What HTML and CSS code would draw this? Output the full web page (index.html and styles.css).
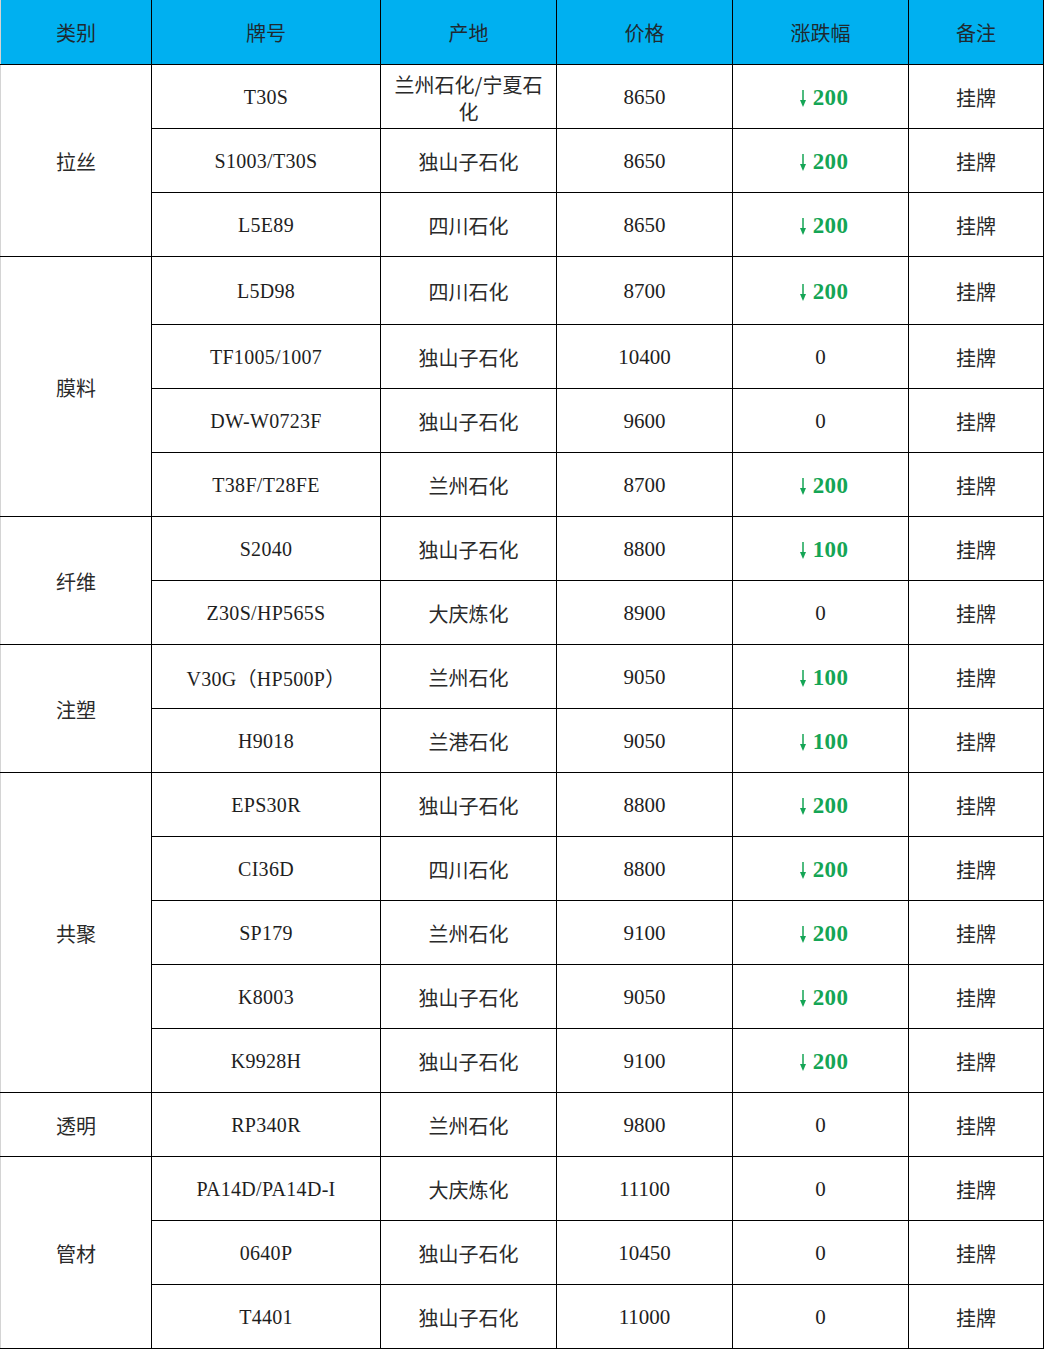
FILE: index.html
```html
<!DOCTYPE html>
<html lang="zh-CN">
<head>
<meta charset="utf-8">
<title>价格表</title>
<link rel="stylesheet" href="styles.css">
</head>
<body>
<table class="price">
  <colgroup>
    <col class="c1"><col class="c2"><col class="c3"><col class="c4"><col class="c5"><col class="c6">
  </colgroup>
  <thead>
    <tr class="head">
      <th class="first">类别</th><th>牌号</th><th>产地</th><th>价格</th><th>涨跌幅</th><th>备注</th>
    </tr>
  </thead>
  <tbody>
    <tr><td class="cat first" rowspan="3">拉丝</td><td class="code">T30S</td><td class="cn">兰州石化/宁夏石化</td><td class="num">8650</td><td class="chg"><span class="down"><svg class="arr" viewBox="0 0 8 19" width="8" height="19"><path d="M4 1V13" stroke="currentColor" stroke-width="1.5" fill="none"/><path d="M1 11L4 18L7 11Z" fill="currentColor"/></svg>200</span></td><td class="cn">挂牌</td></tr>
    <tr><td class="code">S1003/T30S</td><td class="cn">独山子石化</td><td class="num">8650</td><td class="chg"><span class="down"><svg class="arr" viewBox="0 0 8 19" width="8" height="19"><path d="M4 1V13" stroke="currentColor" stroke-width="1.5" fill="none"/><path d="M1 11L4 18L7 11Z" fill="currentColor"/></svg>200</span></td><td class="cn">挂牌</td></tr>
    <tr><td class="code">L5E89</td><td class="cn">四川石化</td><td class="num">8650</td><td class="chg"><span class="down"><svg class="arr" viewBox="0 0 8 19" width="8" height="19"><path d="M4 1V13" stroke="currentColor" stroke-width="1.5" fill="none"/><path d="M1 11L4 18L7 11Z" fill="currentColor"/></svg>200</span></td><td class="cn">挂牌</td></tr>

    <tr class="tall"><td class="cat first" rowspan="4">膜料</td><td class="code">L5D98</td><td class="cn">四川石化</td><td class="num">8700</td><td class="chg"><span class="down"><svg class="arr" viewBox="0 0 8 19" width="8" height="19"><path d="M4 1V13" stroke="currentColor" stroke-width="1.5" fill="none"/><path d="M1 11L4 18L7 11Z" fill="currentColor"/></svg>200</span></td><td class="cn">挂牌</td></tr>
    <tr><td class="code">TF1005/1007</td><td class="cn">独山子石化</td><td class="num">10400</td><td class="chg zero">0</td><td class="cn">挂牌</td></tr>
    <tr><td class="code">DW-W0723F</td><td class="cn">独山子石化</td><td class="num">9600</td><td class="chg zero">0</td><td class="cn">挂牌</td></tr>
    <tr><td class="code">T38F/T28FE</td><td class="cn">兰州石化</td><td class="num">8700</td><td class="chg"><span class="down"><svg class="arr" viewBox="0 0 8 19" width="8" height="19"><path d="M4 1V13" stroke="currentColor" stroke-width="1.5" fill="none"/><path d="M1 11L4 18L7 11Z" fill="currentColor"/></svg>200</span></td><td class="cn">挂牌</td></tr>

    <tr><td class="cat first" rowspan="2">纤维</td><td class="code">S2040</td><td class="cn">独山子石化</td><td class="num">8800</td><td class="chg"><span class="down"><svg class="arr" viewBox="0 0 8 19" width="8" height="19"><path d="M4 1V13" stroke="currentColor" stroke-width="1.5" fill="none"/><path d="M1 11L4 18L7 11Z" fill="currentColor"/></svg>100</span></td><td class="cn">挂牌</td></tr>
    <tr><td class="code">Z30S/HP565S</td><td class="cn">大庆炼化</td><td class="num">8900</td><td class="chg zero">0</td><td class="cn">挂牌</td></tr>

    <tr><td class="cat first" rowspan="2">注塑</td><td class="code">V30G（HP500P）</td><td class="cn">兰州石化</td><td class="num">9050</td><td class="chg"><span class="down"><svg class="arr" viewBox="0 0 8 19" width="8" height="19"><path d="M4 1V13" stroke="currentColor" stroke-width="1.5" fill="none"/><path d="M1 11L4 18L7 11Z" fill="currentColor"/></svg>100</span></td><td class="cn">挂牌</td></tr>
    <tr><td class="code">H9018</td><td class="cn">兰港石化</td><td class="num">9050</td><td class="chg"><span class="down"><svg class="arr" viewBox="0 0 8 19" width="8" height="19"><path d="M4 1V13" stroke="currentColor" stroke-width="1.5" fill="none"/><path d="M1 11L4 18L7 11Z" fill="currentColor"/></svg>100</span></td><td class="cn">挂牌</td></tr>

    <tr><td class="cat first" rowspan="5">共聚</td><td class="code">EPS30R</td><td class="cn">独山子石化</td><td class="num">8800</td><td class="chg"><span class="down"><svg class="arr" viewBox="0 0 8 19" width="8" height="19"><path d="M4 1V13" stroke="currentColor" stroke-width="1.5" fill="none"/><path d="M1 11L4 18L7 11Z" fill="currentColor"/></svg>200</span></td><td class="cn">挂牌</td></tr>
    <tr><td class="code">CI36D</td><td class="cn">四川石化</td><td class="num">8800</td><td class="chg"><span class="down"><svg class="arr" viewBox="0 0 8 19" width="8" height="19"><path d="M4 1V13" stroke="currentColor" stroke-width="1.5" fill="none"/><path d="M1 11L4 18L7 11Z" fill="currentColor"/></svg>200</span></td><td class="cn">挂牌</td></tr>
    <tr><td class="code">SP179</td><td class="cn">兰州石化</td><td class="num">9100</td><td class="chg"><span class="down"><svg class="arr" viewBox="0 0 8 19" width="8" height="19"><path d="M4 1V13" stroke="currentColor" stroke-width="1.5" fill="none"/><path d="M1 11L4 18L7 11Z" fill="currentColor"/></svg>200</span></td><td class="cn">挂牌</td></tr>
    <tr><td class="code">K8003</td><td class="cn">独山子石化</td><td class="num">9050</td><td class="chg"><span class="down"><svg class="arr" viewBox="0 0 8 19" width="8" height="19"><path d="M4 1V13" stroke="currentColor" stroke-width="1.5" fill="none"/><path d="M1 11L4 18L7 11Z" fill="currentColor"/></svg>200</span></td><td class="cn">挂牌</td></tr>
    <tr><td class="code">K9928H</td><td class="cn">独山子石化</td><td class="num">9100</td><td class="chg"><span class="down"><svg class="arr" viewBox="0 0 8 19" width="8" height="19"><path d="M4 1V13" stroke="currentColor" stroke-width="1.5" fill="none"/><path d="M1 11L4 18L7 11Z" fill="currentColor"/></svg>200</span></td><td class="cn">挂牌</td></tr>

    <tr><td class="cat first">透明</td><td class="code">RP340R</td><td class="cn">兰州石化</td><td class="num">9800</td><td class="chg zero">0</td><td class="cn">挂牌</td></tr>

    <tr><td class="cat first" rowspan="3">管材</td><td class="code">PA14D/PA14D-I</td><td class="cn">大庆炼化</td><td class="num">11100</td><td class="chg zero">0</td><td class="cn">挂牌</td></tr>
    <tr><td class="code">0640P</td><td class="cn">独山子石化</td><td class="num">10450</td><td class="chg zero">0</td><td class="cn">挂牌</td></tr>
    <tr><td class="code">T4401</td><td class="cn">独山子石化</td><td class="num">11000</td><td class="chg zero">0</td><td class="cn">挂牌</td></tr>
  </tbody>
</table>
</body>
</html>
```
FILE: styles.css
```css
html, body {
  margin: 0;
  padding: 0;
  background: #ffffff;
}

.price {
  width: 1043px;
  table-layout: fixed;
  border-collapse: collapse;
  font-family: "Liberation Serif", "Noto Sans CJK SC", serif;
  color: #222222;
}

.c1 { width: 151px; }
.c2 { width: 229px; }
.c3 { width: 176px; }
.c4 { width: 176px; }
.c5 { width: 176px; }
.c6 { width: 135px; }

.price th,
.price td {
  border: 1px solid #000000;
  text-align: center;
  vertical-align: middle;
  padding: 3px 8px 0;
  font-weight: normal;
}

.head {
  height: 64px;
}

.head th {
  background: #00b0f0;
  border-top: none;
  font-family: "Noto Sans CJK SC", sans-serif;
  font-size: 20px;
  color: #1f2a30;
  padding-top: 2px;
}

.price tbody tr {
  height: 64px;
}

.price tbody tr.tall {
  height: 68px;
}

.price .first {
  border-left: 1px solid #d4d4d4;
}

.cat,
.cn {
  font-family: "Noto Sans CJK SC", sans-serif;
  font-size: 20px;
  line-height: 27px;
  color: #2a2a2a;
}

.code {
  font-family: "Liberation Serif", "Noto Sans CJK SC", serif;
  font-size: 20px;
  letter-spacing: 0.3px;
  color: #1e1e1e;
}

.num {
  font-family: "Liberation Serif", serif;
  font-size: 21px;
  color: #1e1e1e;
}

.chg {
  font-family: "Liberation Serif", serif;
  font-size: 21px;
  padding-top: 4px;
}

.zero {
  color: #1e1e1e;
  padding-top: 3px;
}

.down {
  display: inline-flex;
  align-items: center;
  gap: 6px;
  color: #14a555;
  font-weight: bold;
  font-size: 23px;
  letter-spacing: 0.4px;
  margin-left: 6px;
  padding-top: 3px;
}

.arr {
  display: block;
  margin-top: 1px;
}
```
